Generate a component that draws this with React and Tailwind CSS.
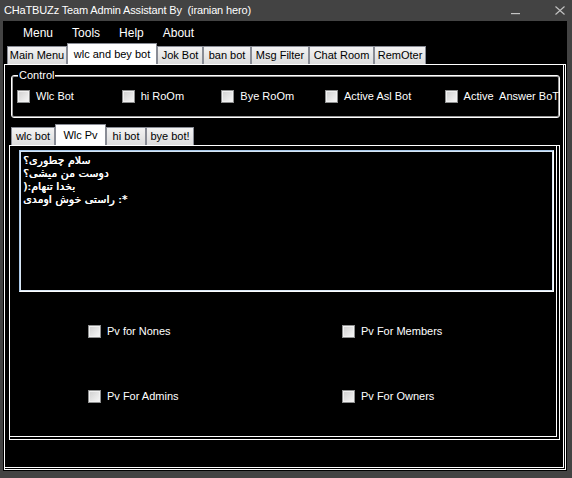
import React from "react";

const Check = ({ label, className = "" }) => (
  <div className={"flex items-center gap-[6px] " + className}>
    <span className="w-[13px] h-[13px] shrink-0 border border-[#8e8f8f] bg-gradient-to-br from-[#cfcfcf] to-[#f8f8f8] shadow-[inset_0_0_0_1px_#f2f2f2]" />
    <span className="text-white whitespace-pre leading-[13px]">{label}</span>
  </div>
);

const Tab = ({ label, w, sel }) =>
  sel ? (
    <div className={w + " h-[21px] bg-white border border-[#898c95] border-b-0 flex items-start justify-center pt-[2px] text-black whitespace-nowrap"}>
      {label}
    </div>
  ) : (
    <div className={w + " h-[18px] bg-gradient-to-b from-[#f3f3f3] to-[#dcdcdc] border border-[#898c95] border-b-0 flex items-center justify-center text-black whitespace-nowrap"}>
      {label}
    </div>
  );

export default function App() {
  return (
    <div className="w-[572px] h-[478px] bg-[#434343] flex flex-col font-['Liberation_Sans',Arial,sans-serif] text-[11px] overflow-hidden">
      {/* title bar */}
      <div className="h-[21px] shrink-0 flex items-center pl-[4px] text-white">
        <span className="text-[11px] tracking-[-0.15px] whitespace-pre">CHaTBUZz Team Admin Assistant By  (iranian hero)</span>
        <div className="ml-auto self-start flex items-start pt-[6px] pr-[7px] gap-[35px]">
          <svg width="9" height="9" viewBox="0 0 9 9">
            <rect x="0" y="7" width="9" height="1.2" fill="#c4c4c4" />
          </svg>
          <svg width="10" height="9" viewBox="0 0 10 9">
            <path d="M0.5 0.5 L9.5 8.5 M9.5 0.5 L0.5 8.5" stroke="#c4c4c4" strokeWidth="1.1" fill="none" />
          </svg>
        </div>
      </div>

      {/* body */}
      <div className="flex-1 ml-[3px] mr-[5px] mb-[7px] bg-black flex flex-col">
        {/* menu */}
        <div className="h-[23px] shrink-0 flex items-center pl-[20px] pt-[1px] gap-[19px] text-white text-[12px]">
          <span>Menu</span>
          <span>Tools</span>
          <span>Help</span>
          <span>About</span>
        </div>

        {/* main tabs */}
        <div className="h-[20px] shrink-0 flex items-end pl-[4px]">
          <Tab label="Main Menu" w="w-[60px]" />
          <Tab label="wlc and bey bot" w="w-[90px]" sel />
          <Tab label="Jok Bot" w="w-[46px]" />
          <Tab label="ban bot" w="w-[48px]" />
          <Tab label="Msg Filter" w="w-[58px]" />
          <Tab label="Chat Room" w="w-[65px]" />
          <Tab label="RemOter" w="w-[52px]" />
        </div>

        {/* main page */}
        <div className="flex-1 ml-[1px] mr-[1px] mb-[1px] border border-white flex flex-col">
          <div className="flex-1 mr-[1px] mb-[1px] border-r border-b border-white flex flex-col">
            {/* Control group */}
            <div className="relative mt-[10px] ml-[6px] mr-[3px] h-[43px] border border-white rounded-[3px] shadow-[inset_0_0_0_1px_#9a9a9a]">
              <span className="absolute left-[6px] -top-[7px] bg-black px-[1px] text-white leading-[13px]">Control</span>
              <div className="flex items-start pt-[14px] pl-[5px]">
                <Check label="Wlc Bot" className="w-[105px]" />
                <Check label="hi RoOm" className="w-[100px]" />
                <Check label="Bye RoOm" className="w-[104px]" />
                <Check label="Active Asl Bot" className="w-[120px]" />
                <Check label="Active  Answer BoT" />
              </div>
            </div>

            {/* inner tabs */}
            <div className="mt-[6px] h-[21px] shrink-0 flex items-end pl-[6px]">
              <Tab label="wlc bot" w="w-[44px]" />
              <Tab label="Wlc Pv" w="w-[51px]" sel />
              <Tab label="hi bot" w="w-[40px]" />
              <Tab label="bye bot!" w="w-[48px]" />
            </div>

            {/* inner page */}
            <div className="ml-[4px] mr-[3px] h-[295px] border border-white flex flex-col">
              <div className="flex-1 mr-[2px] mb-[2px] border-r border-b border-white flex flex-col">
                <div className="ml-[9px] mt-[4px] w-[535px] h-[142px] border border-white border-t-[#a8c8ea] border-l-[#a8c8ea] shadow-[inset_0_0_0_1px_#d8e6f4] pl-[3px] pt-[3px] text-white font-['DejaVu_Sans',sans-serif] text-[11px] leading-[13px] text-left [text-shadow:0.4px_0_0_#fff]">
                  <div dir="ltr">{"سلام چطوری"}{"؟"}</div>
                  <div dir="ltr">{"دوست من میشی"}{"؟"}</div>
                  <div dir="ltr">{"\u200E):\u200E"}{"بخدا تنهام"}</div>
                  <div dir="ltr">{"راستی خوش اومدی"}{" :*"}</div>
                </div>

                <div className="mt-[33px] pl-[78px] grid grid-cols-[254px_auto] gap-y-[52px]">
                  <Check label="Pv for Nones" />
                  <Check label="Pv For Members" />
                  <Check label="Pv For Admins" />
                  <Check label="Pv For Owners" />
                </div>
              </div>
            </div>
          </div>
        </div>
      </div>
    </div>
  );
}
